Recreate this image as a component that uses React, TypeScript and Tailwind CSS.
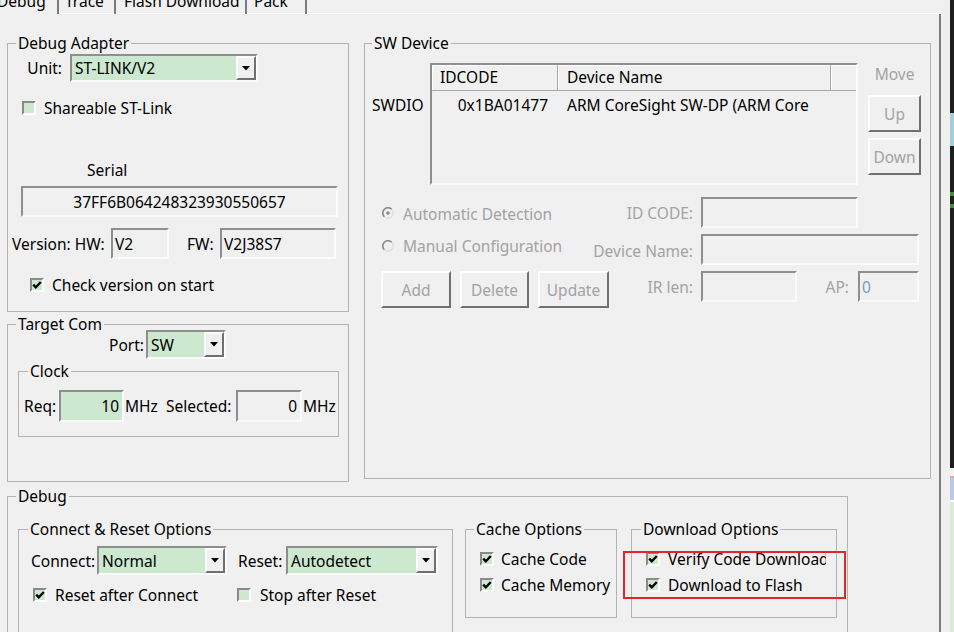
import clsx from 'clsx'
import type { ReactNode } from 'react'

const sunken = 'border-2 border-t-[#8f8f8f] border-l-[#8f8f8f] border-b-[#fbfbfb] border-r-[#fbfbfb]'
const raised = 'border-2 border-t-[#fdfdfd] border-l-[#fdfdfd] border-b-[#707070] border-r-[#707070]'

function Group({ title, className, legend = 'ml-[8px]', children }: { title: string; className?: string; legend?: string; children?: ReactNode }) {
    return (
        <fieldset className={clsx('min-w-0 shrink-0 border border-[#b4b4b4]', className)}>
            <legend className={clsx('px-[2px] leading-[18px]', legend)}>{title}</legend>
            {children}
        </fieldset>
    )
}

function Check({ checked }: { checked?: boolean }) {
    return (
        <span className="flex h-[14px] w-[14px] shrink-0 items-center justify-center border-2 border-t-[#8a8a8a] border-l-[#8a8a8a] border-b-white border-r-white bg-[#cce8cf]">
            {checked && (
                <svg viewBox="0 0 10 10" className="h-[10px] w-[10px]">
                    <path d="M1.2 4.6 L3.8 7.3 L8.8 2" stroke="#000" strokeWidth="2.4" fill="none" />
                </svg>
            )}
        </span>
    )
}

function Radio({ on }: { on?: boolean }) {
    return (
        <svg viewBox="0 0 12 12" className="h-[12px] w-[12px] shrink-0">
            <circle cx="6" cy="6" r="5.2" fill="#f0f0f0" stroke="#dcdcdc" strokeWidth="1.2" />
            <path d="M9.7 2.3 A5.2 5.2 0 0 0 2.3 9.7" stroke="#8a8a8a" strokeWidth="1.6" fill="none" />
            {on && <circle cx="6" cy="6" r="1.8" fill="#8a8a8a" />}
        </svg>
    )
}

function Combo({ value, className }: { value: string; className?: string }) {
    return (
        <div className={clsx('flex shrink-0 bg-[#cce8cf]', sunken, className)}>
            <span className="flex-1 self-center pl-[3px] whitespace-nowrap">{value}</span>
            <span className={clsx('flex w-[20px] items-center justify-center bg-[#f0f0f0]', raised)}>
                <svg width="8" height="5" viewBox="0 0 8 5">
                    <path d="M0 0 H8 L4 4.5 Z" fill="#000" />
                </svg>
            </span>
        </div>
    )
}

function Edit({ value, className, right, bg = 'bg-[#f0f0f0]' }: { value?: string; className?: string; right?: boolean; bg?: string }) {
    return (
        <div className={clsx('flex shrink-0 items-center overflow-hidden whitespace-nowrap px-[2px]', sunken, bg, right && 'justify-end pr-[3px]', className)}>
            {value}
        </div>
    )
}

function Btn({ label, className }: { label: string; className?: string }) {
    return (
        <div className={clsx('flex h-[37px] shrink-0 items-center justify-center bg-[#f0f0f0] text-[#a3a3a3]', raised, className)}>
            {label}
        </div>
    )
}

function Tabs() {
    return (
        <div className="flex h-[14px] shrink-0 overflow-hidden">
            <div className="w-[57px]"><span className="-mt-[9px] -ml-[3px] block">Debug</span></div>
            <div className="w-[2px] bg-[#7a7a7a]" />
            <div className="w-[55px] border-b border-white pl-[6px]"><span className="-mt-[9px] block">Trace</span></div>
            <div className="w-[2px] bg-[#7a7a7a]" />
            <div className="w-[129px] border-b border-white pl-[8px]"><span className="-mt-[9px] block whitespace-nowrap">Flash Download</span></div>
            <div className="w-[2px] bg-[#7a7a7a]" />
            <div className="w-[58px] border-b border-white pl-[7px]"><span className="-mt-[9px] block">Pack</span></div>
            <div className="w-[2px] bg-[#7a7a7a]" />
            <div className="flex-1 border-b border-white" />
        </div>
    )
}

function DebugAdapter() {
    return (
        <Group title="Debug Adapter" className="h-[278px]">
            <div className="mt-[2px] flex h-[28px] items-center">
                <span className="w-[54px] text-right">Unit:</span>
                <Combo value="ST-LINK/V2" className="ml-[8px] h-[28px] w-[188px]" />
            </div>
            <div className="mt-[16px] flex h-[20px] items-center gap-[8px] pl-[14px]">
                <Check />
                <span>Shareable ST-Link</span>
            </div>
            <div className="mt-[42px] h-[20px] pl-[79px]">Serial</div>
            <Edit value="37FF6B064248323930550657" className="mt-[6px] ml-[13px] h-[31px] w-[317px] justify-center" />
            <div className="mt-[11px] flex h-[31px] items-center">
                <span className="w-[103px] pl-[4px] whitespace-nowrap">Version: HW:</span>
                <Edit value="V2" className="h-[31px] w-[58px]" />
                <span className="w-[51px] pl-[18px]">FW:</span>
                <Edit value="V2J38S7" className="h-[31px] w-[116px]" />
            </div>
            <div className="mt-[16px] flex h-[20px] items-center gap-[8px] pl-[22px]">
                <Check checked />
                <span>Check version on start</span>
            </div>
        </Group>
    )
}

function TargetCom() {
    return (
        <Group title="Target Com" className="mt-[3px] h-[167px]">
            <div className="-mt-[3px] flex h-[29px] items-center">
                <span className="w-[136px] text-right">Port:</span>
                <Combo value="SW" className="ml-[2px] h-[29px] w-[80px]" />
            </div>
            <Group title="Clock" legend="ml-[9px]" className="mt-[3px] ml-[10px] h-[75px] w-[321px]">
                <div className="mt-[10px] flex h-[32px] items-center">
                    <span className="w-[40px] pl-[5px]">Req:</span>
                    <Edit value="10" right bg="bg-[#cce8cf]" className="h-[32px] w-[65px]" />
                    <span className="w-[42px] pl-[1px]">MHz</span>
                    <span className="w-[70px]">Selected:</span>
                    <Edit value="0" right className="h-[32px] w-[66px]" />
                    <span className="pl-[1px]">MHz</span>
                </div>
            </Group>
        </Group>
    )
}

function SwDevice() {
    return (
        <Group title="SW Device" legend="ml-[7px]" className="h-[445px] w-[567px]">
            <div className="mt-[11px] flex items-start">
                <span className="mt-[32px] w-[65px] pl-[7px]">SWDIO</span>
                <div className={clsx('h-[122px] w-[428px] shrink-0 bg-[#f0f0f0]', sunken)}>
                    <div className="flex h-[26px] border-b border-b-[#a8a8a8]">
                        <div className="w-[126px] border-r border-r-[#a8a8a8] pl-[8px] leading-[25px] shadow-[inset_1px_1px_0_#fff]">IDCODE</div>
                        <div className="w-[273px] border-r border-r-[#a8a8a8] pl-[9px] leading-[25px] shadow-[inset_1px_1px_0_#fff]">Device Name</div>
                        <div className="flex-1 shadow-[inset_1px_1px_0_#fff]" />
                    </div>
                    <div className="mt-[4px] flex h-[20px] whitespace-nowrap">
                        <span className="w-[126px] pr-[10px] text-right">0x1BA01477</span>
                        <span className="pl-[9px]">ARM CoreSight SW-DP (ARM Core</span>
                    </div>
                </div>
                <div className="ml-[10px] flex w-[53px] flex-col">
                    <span className="mt-[1px] h-[20px] text-center text-[#a3a3a3]">Move</span>
                    <Btn label="Up" className="mt-[11px] w-[53px]" />
                    <Btn label="Down" className="mt-[6px] w-[53px]" />
                </div>
            </div>
            <div className="mt-[12px] flex h-[31px] items-center text-[#a3a3a3]">
                <div className="flex w-[336px] items-center">
                    <span className="ml-[17px]"><Radio on /></span>
                    <span className="ml-[9px] mt-[3px]">Automatic Detection</span>
                    <span className="ml-auto pr-[8px]">ID CODE:</span>
                </div>
                <Edit className="h-[31px] w-[157px]" />
            </div>
            <div className="mt-[6px] flex h-[31px] items-center text-[#a3a3a3]">
                <div className="flex w-[336px] items-center">
                    <span className="ml-[17px] -mt-[8px]"><Radio /></span>
                    <span className="ml-[9px] -mt-[8px]">Manual Configuration</span>
                    <span className="ml-auto pr-[8px] pt-[2px]">Device Name:</span>
                </div>
                <Edit className="h-[31px] w-[218px]" />
            </div>
            <div className="mt-[6px] flex items-start text-[#a3a3a3]">
                <Btn label="Add" className="ml-[16px] w-[70px]" />
                <Btn label="Delete" className="ml-[9px] w-[69px]" />
                <Btn label="Update" className="ml-[9px] w-[71px]" />
                <span className="w-[92px] pr-[8px] text-right leading-[33px]">IR len:</span>
                <Edit className="h-[31px] w-[96px]" />
                <span className="w-[61px] pr-[9px] text-right leading-[33px]">AP:</span>
                <Edit value="0" className="h-[31px] w-[61px] text-[#7f97bd]" />
            </div>
        </Group>
    )
}

function DebugGroup() {
    return (
        <div className="relative mt-[5px]">
            <Group title="Debug" className="h-[160px] w-[841px]">
                <div className="mt-[15px] flex items-start">
                    <Group title="Connect & Reset Options" legend="ml-[9px]" className="ml-[10px] h-[140px] w-[435px]">
                        <div className="mt-[8px] flex h-[29px] items-center">
                            <span className="w-[78px] pl-[12px]">Connect:</span>
                            <Combo value="Normal" className="h-[29px] w-[130px]" />
                            <span className="w-[59px] pl-[11px]">Reset:</span>
                            <Combo value="Autodetect" className="h-[29px] w-[152px]" />
                        </div>
                        <div className="mt-[10px] flex h-[20px] items-center pl-[14px]">
                            <div className="flex w-[204px] items-center gap-[8px]">
                                <Check checked />
                                <span>Reset after Connect</span>
                            </div>
                            <div className="flex items-center gap-[9px]">
                                <Check />
                                <span>Stop after Reset</span>
                            </div>
                        </div>
                    </Group>
                    <Group title="Cache Options" className="ml-[12px] h-[98px] w-[152px]">
                        <div className="mt-[11px] flex h-[20px] items-center gap-[7px] pl-[14px] whitespace-nowrap">
                            <Check checked />
                            <span>Cache Code</span>
                        </div>
                        <div className="mt-[6px] flex h-[20px] items-center gap-[7px] pl-[14px] whitespace-nowrap">
                            <Check checked />
                            <span>Cache Memory</span>
                        </div>
                    </Group>
                    <Group title="Download Options" legend="ml-[9px]" className="ml-[14px] h-[98px] w-[206px]">
                        <div className="mt-[11px] flex h-[20px] w-[194px] items-center gap-[8px] overflow-hidden pl-[14px] whitespace-nowrap">
                            <Check checked />
                            <span>Verify Code Download</span>
                        </div>
                        <div className="mt-[6px] flex h-[20px] items-center gap-[8px] pl-[14px] whitespace-nowrap">
                            <Check checked />
                            <span>Download to Flash</span>
                        </div>
                    </Group>
                </div>
            </Group>
            <div className="absolute left-[616px] top-[64px] h-[48px] w-[223px] border-2 border-[#e3242b]" />
        </div>
    )
}

export default function App() {
    return (
        <div className="flex h-[632px] w-[954px] overflow-hidden bg-[#f0f0f0] font-['Noto_Sans',sans-serif] text-[15.5px] leading-[20px] text-black">
            <div className="flex w-[941px] shrink-0 flex-col">
                <Tabs />
                <div className="min-h-0 flex-1 overflow-hidden border-r-2 border-r-[#7d7d7d] pl-[7px] pt-[20px]">
                    <div className="flex items-start gap-[15px]">
                        <div className="flex w-[342px] flex-col">
                            <DebugAdapter />
                            <TargetCom />
                        </div>
                        <SwDevice />
                    </div>
                    <DebugGroup />
                </div>
            </div>
            <div className="w-[9px] shrink-0" />
            <div className="flex w-[4px] shrink-0 flex-col bg-[#1e1e1e]">
                <div className="mt-[113px] h-[33px] bg-[#9fd0dc]" />
                <div className="mt-[46px] h-[4px] bg-[#3f8f3f]" />
                <div className="mt-[8px] h-[4px] bg-[#3f8f3f]" />
                <div className="mt-[260px] h-[8px] bg-[#f4f4f4]" />
                <div className="h-[2px] bg-[#e7a0b0]" />
                <div className="h-[22px] bg-[#b9c9e6]" />
                <div className="h-[2px] bg-white" />
                <div className="flex-1 bg-[#d8ecd6]" />
            </div>
        </div>
    )
}
